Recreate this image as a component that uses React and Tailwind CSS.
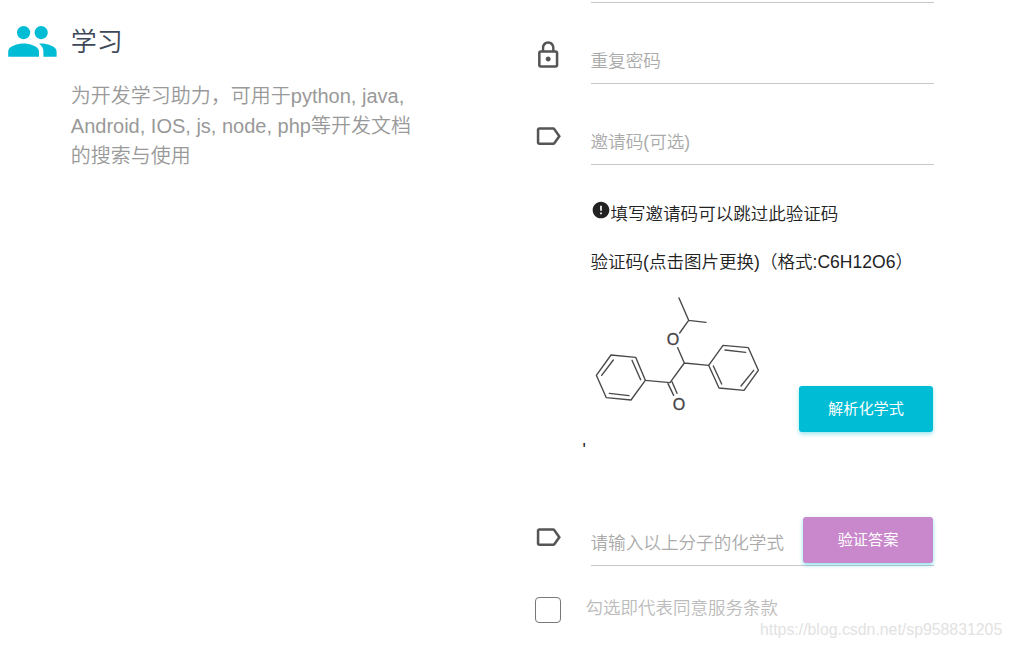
import React from "react";
import { MdPeople, MdLockOutline, MdLabelOutline, MdError } from "react-icons/md";

function Molecule() {
  return (
    <svg
      width="200"
      height="140"
      viewBox="0 0 600 420"
      className="-ml-4 block shrink-0"
      fill="none"
      stroke="#4a4a4a"
      strokeWidth="4.2"
      strokeLinecap="round"
      strokeLinejoin="round"
    >
      <path d="M312 39 341 106 393 112M341 106 314 144" />
      <path d="M308 188 328 234 401 241M328 234 285 293 211 286" />
      <path d="M279 296 296 331M291 290 306 325" />
      <path d="M108 210 182 217 211 286 168 345 94 338 64 271Z" />
      <path d="M115 225 80 271M171 226 197 284M162 332 103 325" />
      <path d="M444 181 520 188 550 256 507 316 432 309 401 241Z" />
      <path d="M450 195 512 202M536 256 498 303M415 243 440 297" />
      <g fill="#444" stroke="#444" strokeWidth="1" fontSize="48" fontFamily="Liberation Sans, Arial, sans-serif" textAnchor="middle">
        <text x="294" y="180">O</text>
        <text x="312" y="376">O</text>
      </g>
    </svg>
  );
}

function Field({ icon: Icon, label, children }) {
  return (
    <div className="flex h-[81px]">
      <div className="w-[58px] pt-[37px] text-[#555]">
        <Icon size={30.4} />
      </div>
      <div className="flex flex-1 border-b border-[#c8c8c8] text-[17.6px] text-[#aaa]">
        <span className="-ml-[0.5px] mt-[45px] h-[26px] whitespace-nowrap leading-[26px]">{label}</span>
        {children}
      </div>
    </div>
  );
}

export default function App() {
  return (
    <div
      className="relative flex h-[648px] w-[1012px] overflow-hidden bg-white font-[350]"
      style={{ fontFamily: '"Liberation Sans", "Noto Sans CJK SC", sans-serif' }}
    >
      <section className="flex w-[533px] pl-[6px] pt-[15px]">
        <MdPeople size={52.8} className="shrink-0 text-[#00bcd4]" />
        <div className="ml-[12px] w-[350px]">
          <h2 className="mt-[8px] text-[26px] leading-[38px] text-[#3c4858]">学习</h2>
          <p className="mt-[20px] text-[20px] leading-[30px] text-[#999]">
            为开发学习助力，可用于python, java,
            <br />
            Android, IOS, js, node, php等开发文档
            <br />
            的搜索与使用
          </p>
        </div>
      </section>

      <form className="w-[401px]">
        <div className="ml-[58px] h-[3px] border-b border-[#c8c8c8]" />
        <Field icon={MdLockOutline} label="重复密码" />
        <Field icon={MdLabelOutline} label="邀请码(可选)" />
        <div className="ml-[58px] text-[17.55px] text-[#222]">
          <div className="mt-[35px] flex h-[26px] leading-[26px]">
            <MdError size={20} className="shrink-0" />
            <span className="-ml-[0.5px] mt-px whitespace-nowrap">填写邀请码可以跳过此验证码</span>
          </div>
          <p className="-ml-[0.5px] mt-[23px] h-[26px] whitespace-nowrap leading-[26px]">验证码(点击图片更换)（格式:C6H12O6）</p>
          <div className="mt-[10px] flex h-[150px] justify-between">
            <Molecule />
            <button
              type="button"
              className="mr-px mt-[101px] h-[46px] w-[134px] shrink-0 rounded-[3px] bg-[#00bcd4] text-[15.2px] font-normal text-white shadow-[0_2px_4px_rgba(0,188,212,0.4)]"
            >
              解析化学式
            </button>
          </div>
          <div className="-ml-[8.5px] h-[50px] leading-[30px]">'</div>
        </div>
        <Field icon={MdLabelOutline} label="请输入以上分子的化学式">
          <button
            type="button"
            className="ml-auto mr-px mt-[32px] h-[46px] w-[130px] shrink-0 rounded-[3px] bg-[#c988cc] text-[15.2px] font-normal text-white shadow-[0_2px_4px_rgba(0,188,212,0.45)]"
          >
            验证答案
          </button>
        </Field>
        <div className="flex pl-[2px] pt-[31px]">
          <div className="size-[26px] shrink-0 rounded-[4px] border border-[#777]" />
          <span className="-mt-[2px] ml-[24.5px] text-[17.5px] leading-[26px] text-[#bbb]">勾选即代表同意服务条款</span>
        </div>
      </form>
      <div className="absolute left-[760px] top-[620px] text-[15.85px] leading-[20px] text-[#e2e2e2]">
        https://blog.csdn.net/sp958831205
      </div>
    </div>
  );
}
